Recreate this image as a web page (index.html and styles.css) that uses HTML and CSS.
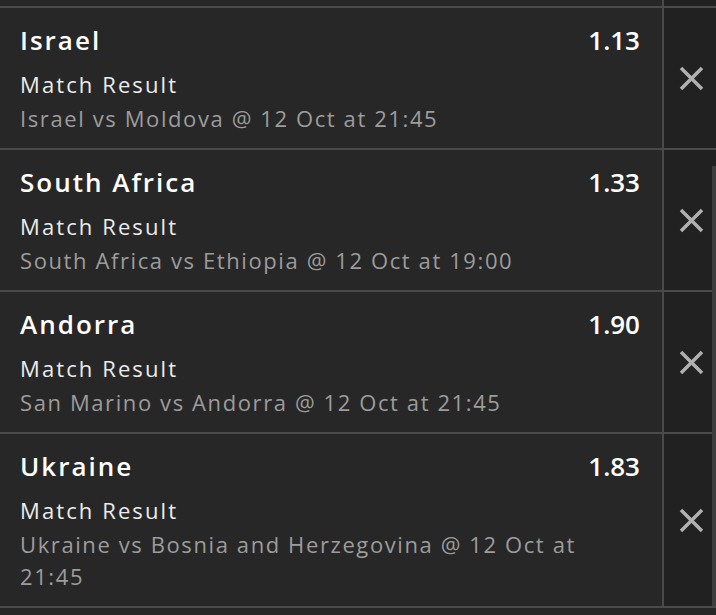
FILE: index.html
```html
<!DOCTYPE html>
<html>
<head>
    <title>Bet Slip</title>
    <link rel="stylesheet" href="styles.css">
</head>
<body>
    <div class="slip">
        <div class="bet stub">
            <div class="info"></div>
            <div class="remove"></div>
        </div>

        <div class="bet">
            <div class="info">
                <div class="top">
                    <span class="name">Israel</span>
                    <span class="odds">1.13</span>
                </div>
                <div class="market">Match Result</div>
                <div class="event">Israel vs Moldova @ 12 Oct at 21:45</div>
            </div>
            <div class="remove">
                <svg width="25" height="25" viewBox="0 0 25 25"><path d="M2 2 L23 23 M23 2 L2 23"/></svg>
            </div>
        </div>

        <div class="bet">
            <div class="info">
                <div class="top">
                    <span class="name">South Africa</span>
                    <span class="odds">1.33</span>
                </div>
                <div class="market">Match Result</div>
                <div class="event">South Africa vs Ethiopia @ 12 Oct at 19:00</div>
            </div>
            <div class="remove">
                <svg width="25" height="25" viewBox="0 0 25 25"><path d="M2 2 L23 23 M23 2 L2 23"/></svg>
            </div>
        </div>

        <div class="bet">
            <div class="info">
                <div class="top">
                    <span class="name">Andorra</span>
                    <span class="odds">1.90</span>
                </div>
                <div class="market">Match Result</div>
                <div class="event">San Marino vs Andorra @ 12 Oct at 21:45</div>
            </div>
            <div class="remove">
                <svg width="25" height="25" viewBox="0 0 25 25"><path d="M2 2 L23 23 M23 2 L2 23"/></svg>
            </div>
        </div>

        <div class="bet">
            <div class="info">
                <div class="top">
                    <span class="name">Ukraine</span>
                    <span class="odds">1.83</span>
                </div>
                <div class="market">Match Result</div>
                <div class="event">Ukraine vs Bosnia and Herzegovina @ 12 Oct at 21:45</div>
            </div>
            <div class="remove">
                <svg width="25" height="25" viewBox="0 0 25 25"><path d="M2 2 L23 23 M23 2 L2 23"/></svg>
            </div>
        </div>

        <div class="scrollbar"></div>
    </div>
</body>
</html>
```

FILE: styles.css
```css
/* bet slip list */
body {
    margin: 0;
    background-color: #262626;
    font-family: "Open Sans", "Noto Sans", sans-serif;
    overflow: hidden;
}

.slip {
    position: relative;
    height: 615px;
}

.bet {
    display: flex;
    border-bottom: 2px solid #4a4a4a;
}

.bet.stub {
    height: 6px;
}

.info {
    flex: 1;
    padding: 15px 22px 14px 20px;
    background-color: #272727;
}

.stub .info {
    padding: 0;
}

.top {
    display: flex;
    justify-content: space-between;
    align-items: baseline;
    font-size: 26px;
    line-height: 34px;
    font-weight: 600;
    color: #ffffff;
}

.name {
    letter-spacing: 2px;
}

.market {
    margin-top: 11px;
    font-size: 22px;
    line-height: 32px;
    letter-spacing: 2.1px;
    color: #ececec;
}

.event {
    margin-top: 2px;
    max-width: 580px;
    font-size: 22px;
    line-height: 32px;
    letter-spacing: 1.6px;
    color: #9c9c9c;
}

.remove {
    width: 54px;
    border-left: 2px solid #4a4a4a;
    background-color: #212121;
    display: flex;
    align-items: center;
    justify-content: center;
    padding-left: 3px;
    box-sizing: border-box;
}

.remove svg {
    stroke: #b0b0b0;
    stroke-width: 3.5;
    fill: none;
}

.scrollbar {
    position: absolute;
    right: 0;
    top: 166px;
    width: 4px;
    height: 440px;
    background-color: #3e3e3e;
}
```
